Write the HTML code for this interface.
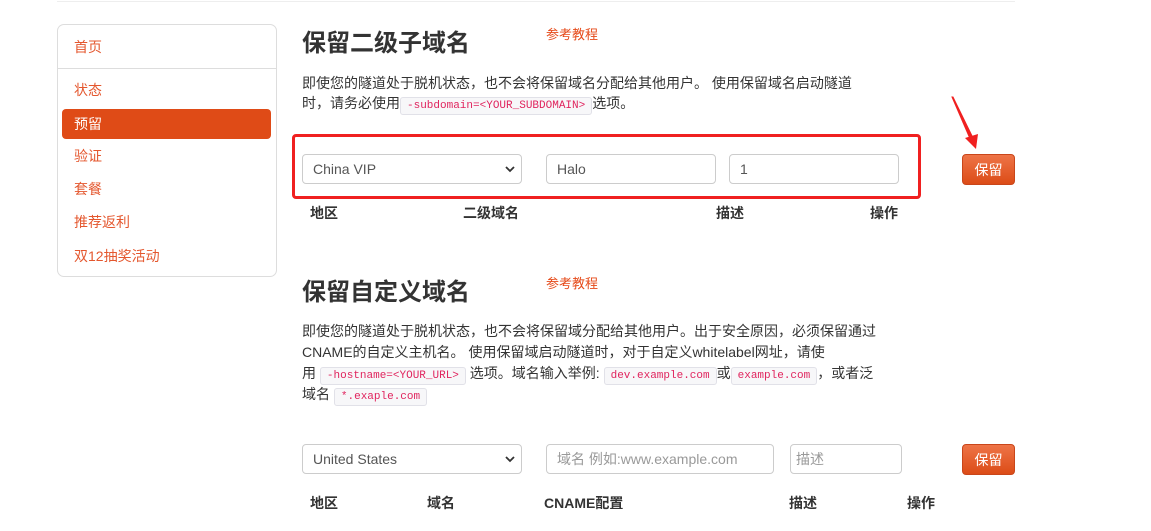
<!DOCTYPE html>
<html><head><meta charset="utf-8"><style>
*{margin:0;padding:0;box-sizing:border-box}
body{width:1151px;height:531px;background:#fff;position:relative;overflow:hidden;font-family:"Liberation Sans","Noto Sans CJK SC",sans-serif;color:#333;font-size:14px}
.a{position:absolute;white-space:nowrap}
.side{position:absolute;left:57px;top:24px;width:220px;height:253px;border:1px solid #ddd;border-radius:7px}
.it{position:absolute;left:16px;color:#e4572e;font-size:14px;line-height:20px}
.act{position:absolute;left:4px;top:84px;width:209px;height:30px;background:#df4b17;border-radius:4px;color:#fff;padding-left:12px;line-height:30px}
h2{position:absolute;font-size:24px;font-weight:bold;color:#333;white-space:nowrap;line-height:32px}
.ref{position:absolute;color:#e64a19;font-size:13px}
.p{position:absolute;left:302px;font-size:14px;line-height:20px;white-space:nowrap;color:#333}
code{font-family:"Liberation Mono",monospace;font-size:11px;color:#e0245e;background:#f7f7f9;border:1px solid #e1e1e8;border-radius:3px;padding:2px 6px}
.in{position:absolute;height:30px;border:1px solid #ccc;border-radius:4px;padding-left:10px;line-height:28px;font-size:14px;color:#555;background:#fff}
.ph{color:#999}
.btn{position:absolute;width:53px;height:31px;border-radius:4px;background:linear-gradient(#ee7447,#dc4c17);color:#fff;text-align:center;line-height:31px;font-size:14px;border:1px solid #c9461a}
.lb{position:absolute;font-weight:bold;font-size:14px;white-space:nowrap}
.chev{position:absolute;right:6px;top:9px}
</style></head><body>
<div class="a" style="left:57px;top:1px;width:958px;height:1px;background:#eee"></div>
<div class="side">
<div class="it" style="top:12px">首页</div>
<div style="position:absolute;left:0;right:0;top:43px;height:1px;background:#ddd"></div>
<div class="it" style="top:55px">状态</div>
<div class="act">预留</div>
<div class="it" style="top:121px">验证</div>
<div class="it" style="top:154px">套餐</div>
<div class="it" style="top:187px">推荐返利</div>
<div class="it" style="top:221px">双12抽奖活动</div>
</div>

<h2 style="left:302px;top:28px">保留二级子域名</h2>
<div class="ref" style="left:546px;top:24px">参考教程</div>
<div class="p" style="top:73px">即使您的隧道处于脱机状态，也不会将保留域名分配给其他用户。 使用保留域名启动隧道</div>
<div class="p" style="top:93px">时，请务必使用<code>-subdomain=&lt;YOUR_SUBDOMAIN&gt;</code>选项。</div>

<div class="a" style="left:292px;top:134px;width:629px;height:65px;border:3px solid #f02020;border-radius:4px"></div>
<div class="in" style="left:302px;top:154px;width:220px">China VIP<svg class="chev" width="10" height="10" viewBox="0 0 10 10"><path d="M1 3l4 4 4-4" fill="none" stroke="#333" stroke-width="1.8"/></svg></div>
<div class="in" style="left:546px;top:154px;width:170px">Halo</div>
<div class="in" style="left:729px;top:154px;width:170px">1</div>
<div class="btn" style="left:962px;top:154px">保留</div>
<svg class="a" style="left:940px;top:90px" width="50" height="65" viewBox="0 0 50 65"><path d="M12 7 L13 7 L34 50 L31 51 Z" fill="#f02020" stroke="#f02020" stroke-width="1"/><path d="M25 48 L36 59 L38 44 Z" fill="#f02020"/></svg>
<div class="lb" style="left:310px;top:203px">地区</div>
<div class="lb" style="left:463px;top:203px">二级域名</div>
<div class="lb" style="left:716px;top:203px">描述</div>
<div class="lb" style="left:870px;top:203px">操作</div>

<h2 style="left:302px;top:277px">保留自定义域名</h2>
<div class="ref" style="left:546px;top:273px">参考教程</div>
<div class="p" style="top:321px">即使您的隧道处于脱机状态，也不会将保留域分配给其他用户。出于安全原因，必须保留通过</div>
<div class="p" style="top:342px">CNAME的自定义主机名。 使用保留域启动隧道时，对于自定义whitelabel网址，请使</div>
<div class="p" style="top:363px">用 <code>-hostname=&lt;YOUR_URL&gt;</code> 选项。域名输入举例: <code>dev.example.com</code>或<code>example.com</code>，或者泛</div>
<div class="p" style="top:384px">域名 <code>*.exaple.com</code></div>

<div class="in" style="left:302px;top:444px;width:220px">United States<svg class="chev" width="10" height="10" viewBox="0 0 10 10"><path d="M1 3l4 4 4-4" fill="none" stroke="#333" stroke-width="1.8"/></svg></div>
<div class="in ph" style="left:546px;top:444px;width:228px">域名 例如:www.example.com</div>
<div class="in ph" style="left:790px;top:444px;width:112px;padding-left:5px">描述</div>
<div class="btn" style="left:962px;top:444px">保留</div>
<div class="lb" style="left:310px;top:493px">地区</div>
<div class="lb" style="left:427px;top:493px">域名</div>
<div class="lb" style="left:544px;top:493px">CNAME配置</div>
<div class="lb" style="left:789px;top:493px">描述</div>
<div class="lb" style="left:907px;top:493px">操作</div>
</body></html>
